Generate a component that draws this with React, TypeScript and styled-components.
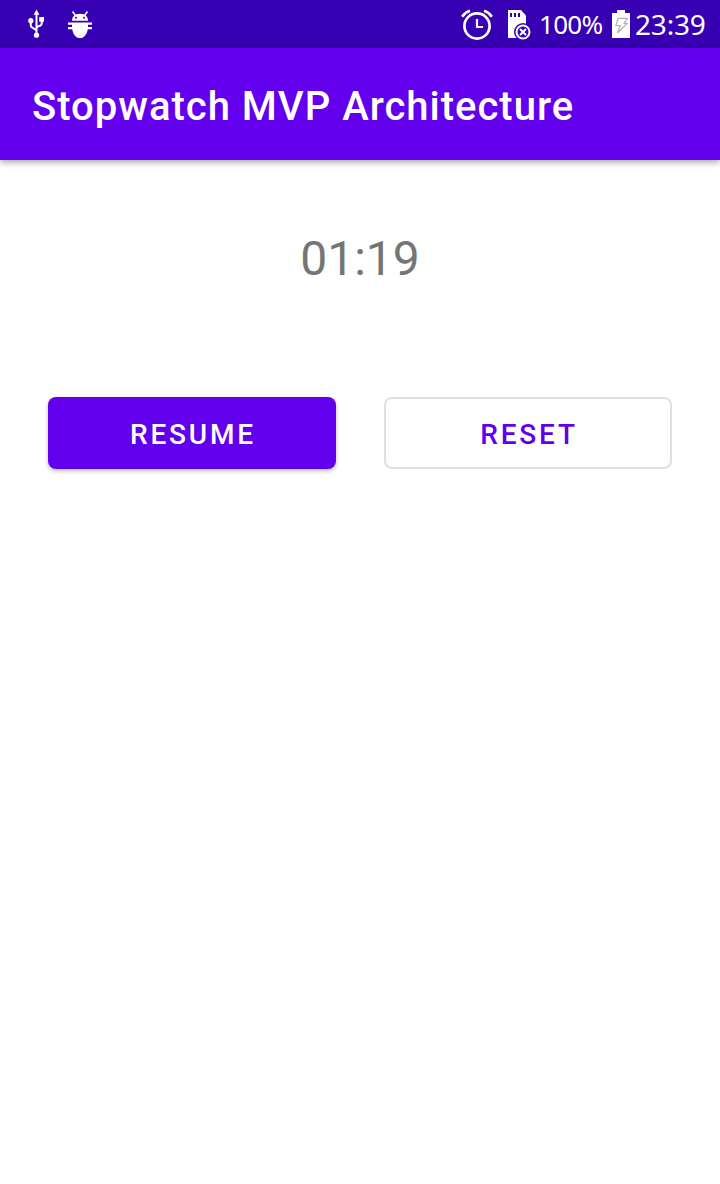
import React from "react";
import styled, { createGlobalStyle } from "styled-components";

const GlobalStyle = createGlobalStyle`
  * { box-sizing: border-box; }
  body { margin: 0; background: #ffffff; }
`;

const Screen = styled.div`
  display: flex;
  flex-direction: column;
  width: 720px;
  height: 1184px;
  overflow: hidden;
  background: #ffffff;
  font-family: Roboto, sans-serif;
`;

const StatusBar = styled.div`
  display: flex;
  justify-content: space-between;
  height: 48px;
  flex: none;
  background: #3700b3;
  color: #ffffff;
  font-family: "Noto Sans", sans-serif;
  white-space: nowrap;
`;

const StatusGroup = styled.div`
  display: flex;
  height: 48px;
`;

const Icon = styled.svg`
  display: block;
  flex: none;
`;

const Percent = styled.span`
  width: 66px;
  margin-left: 6px;
  font-size: 26px;
  line-height: 48px;
  letter-spacing: -0.7px;
`;

const Clock = styled.span`
  width: 87px;
  padding-left: 2px;
  font-size: 28px;
  line-height: 48px;
  letter-spacing: -0.2px;
`;

const AppBar = styled.header`
  position: relative;
  display: flex;
  align-items: center;
  flex: none;
  height: 112px;
  padding: 6px 32px 0;
  background: #6200ee;
  box-shadow: 0 2px 7px rgba(0, 0, 0, 0.38);
`;

const Title = styled.h1`
  margin: 0;
  color: #ffffff;
  font-size: 40px;
  line-height: 48px;
  font-weight: 500;
  letter-spacing: 1px;
  white-space: nowrap;
`;

const Content = styled.main`
  display: flex;
  flex-direction: column;
  padding: 67px 48px 0;
`;

const Time = styled.div`
  height: 64px;
  color: #757575;
  font-size: 48px;
  line-height: 64px;
  text-align: center;
`;

const Actions = styled.div`
  display: grid;
  grid-template-columns: 1fr 1fr;
  gap: 48px;
  margin-top: 106px;
`;

const Button = styled.button<{ $filled?: boolean }>`
  height: 72px;
  padding: 4px 0 0 2px;
  border: ${(p) => (p.$filled ? "0" : "2px solid #e0e0e0")};
  border-radius: 8px;
  background: ${(p) => (p.$filled ? "#6200ee" : "#ffffff")};
  color: ${(p) => (p.$filled ? "#ffffff" : "#6200ee")};
  box-shadow: ${(p) => (p.$filled ? "0 2px 4px rgba(0, 0, 0, 0.27)" : "none")};
  font-family: inherit;
  font-size: 28px;
  line-height: 32px;
  font-weight: 500;
  letter-spacing: 2.8px;
`;

const NotificationIcons = () => (
  <Icon width="110" height="48" viewBox="0 0 110 48" aria-hidden="true">
    <g fill="none" stroke="#fff" strokeWidth="2">
      <path d="M36.5 13v22" />
      <path d="M30.800 20v5.500q0 1.500 1.500 2.200l4.200 2.500M41.700 20v3.500q0 1.500-1.300 2l-3.900 1.700" />
    </g>
    <g fill="#fff">
      <path d="M36.500 9.500l2.900 5.200h-5.800zM39.200 17h4.800v4.800h-4.800z" />
      <circle cx="30.800" cy="20.700" r="2.600" />
      <circle cx="36.500" cy="35.200" r="2.600" />
      <path d="M72 20.700c0-3.700 2.400-7 8-7s8 3.300 8 7z" />
      <path d="M72 22.500H68v2.200h4v2.200H68v2.300h4.200c.8 5 3.600 8.800 7.800 8.800s7-3.800 7.800-8.800H92v-2.300h-4v-2.200h4v-2.200z" />
    </g>
    <path d="M72.500 11.500l3 4M87.500 11.500l-3 4" stroke="#fff" strokeWidth="1.600" />
    <circle cx="76" cy="17.700" r="1" fill="#3700b3" />
    <circle cx="84" cy="17.700" r="1" fill="#3700b3" />
  </Icon>
);

const AlarmAndCard = () => (
  <Icon width="73" height="48" viewBox="460 0 73 48" aria-hidden="true">
    <g fill="none" stroke="#fff">
      <circle cx="477" cy="26" r="12.600" strokeWidth="2.700" />
      <path d="M477 19v8h6" strokeWidth="2.200" />
      <path d="M462.200 16.700Q465 12.200 470 10.700M491.800 16.700Q489 12.200 484 10.700" strokeWidth="2.700" />
    </g>
    <path d="M508 10h13l5 5.500V38h-18z" fill="#fff" />
    <path d="M510 13h2v4h-2zM514 13h2v4h-2zM518 13h2v4h-2z" fill="#3700b3" />
    <circle cx="523" cy="32" r="9" fill="#3700b3" />
    <circle cx="523" cy="32" r="6.500" fill="none" stroke="#fff" strokeWidth="2" />
    <path d="M520 29l6 6M526 29l-6 6" stroke="#fff" strokeWidth="2" />
  </Icon>
);

const Battery = () => (
  <Icon width="28" height="48" viewBox="605 0 28 48" aria-hidden="true">
    <path d="M612 13h5v-3h8v3h5v25h-18z" fill="#fff" />
    <path
      d="M618.300 18.300h9l-3.200 5h3L617.500 33l2.700-7.500h-4.400z"
      fill="none"
      stroke="#b0b0b0"
      strokeWidth="1.200"
    />
  </Icon>
);

export default function App() {
  return (
    <Screen>
      <GlobalStyle />
      <StatusBar>
        <NotificationIcons />
        <StatusGroup>
          <AlarmAndCard />
          <Percent>100%</Percent>
          <Battery />
          <Clock>23:39</Clock>
        </StatusGroup>
      </StatusBar>
      <AppBar>
        <Title>Stopwatch MVP Architecture</Title>
      </AppBar>
      <Content>
        <Time>01:19</Time>
        <Actions>
          <Button $filled>RESUME</Button>
          <Button>RESET</Button>
        </Actions>
      </Content>
    </Screen>
  );
}
